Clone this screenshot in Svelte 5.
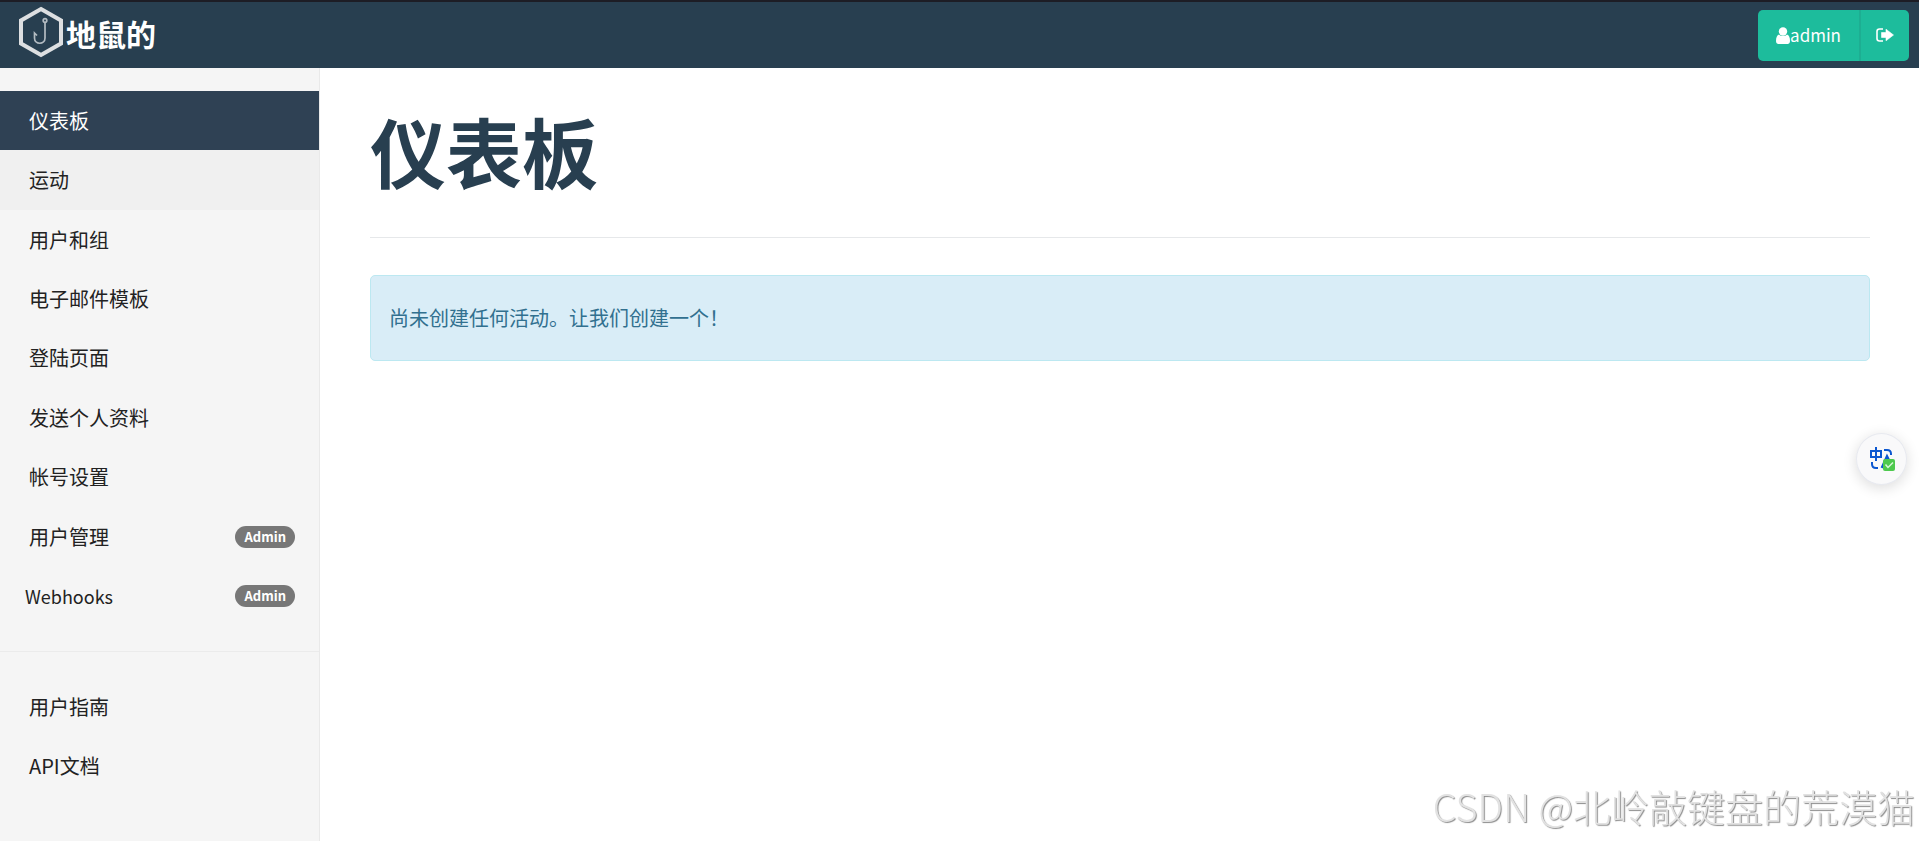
<script lang="ts">
	interface NavItem {
		label: string;
		href: string;
		admin?: boolean;
		latin?: boolean;
	}

	const items: NavItem[] = [
		{ label: '仪表板', href: '#dashboard' },
		{ label: '运动', href: '#campaigns' },
		{ label: '用户和组', href: '#groups' },
		{ label: '电子邮件模板', href: '#templates' },
		{ label: '登陆页面', href: '#landing-pages' },
		{ label: '发送个人资料', href: '#sending-profiles' },
		{ label: '帐号设置', href: '#settings' },
		{ label: '用户管理', href: '#users', admin: true },
		{ label: 'Webhooks', href: '#webhooks', admin: true, latin: true },
	];

	const docs: NavItem[] = [
		{ label: '用户指南', href: '#guide' },
		{ label: 'API文档', href: '#api' },
	];

	let current = $state('#dashboard');
	let highlighted = $state('#campaigns');
</script>

{#snippet row(item: NavItem)}
	<li>
		<a
			href={item.href}
			class:active={current === item.href}
			class:highlighted={highlighted === item.href}
			class:latin={item.latin}
			onclick={() => (current = item.href)}
			onmouseenter={() => (highlighted = item.href)}
		>
			<span>{item.label}</span>
			{#if item.admin}
				<span class="badge">Admin</span>
			{/if}
		</a>
	</li>
{/snippet}

<div class="page">
	<header class="navbar">
		<a class="brand" href="#dashboard">
			<svg viewBox="0 0 46 52" width="46" height="52" aria-hidden="true">
				<path d="M23 3 L43 14.5 V37.5 L23 49 L3 37.5 V14.5 Z" fill="none" stroke="#dddfe1" stroke-width="4" />
				<g fill="none" stroke="#b4bcc2" stroke-width="1.7">
					<circle cx="27" cy="14.5" r="1.8" />
					<path d="M27 16.5 V32 C27 39 16.500 39 16.500 32 V27 L19 29.500" />
				</g>
			</svg>
			<span>地鼠的</span>
		</a>
		<div class="user-buttons">
			<button type="button" class="user">
				<svg viewBox="0 0 14 17" width="14" height="17" aria-hidden="true">
					<circle cx="7" cy="4.5" r="4.2" fill="currentColor" />
					<path d="M3 7.5 C1 8 0 10.5 0 14 C0 16 1 17 2.5 17 H11.5 C13 17 14 16 14 14 C14 10.5 13 8 11 7.5 C9 9.5 5 9.5 3 7.5 Z" fill="currentColor" />
				</svg>
				<span>admin</span>
			</button>
			<button type="button" class="logout" aria-label="Logout">
				<svg viewBox="0 0 18 14" width="18" height="14" aria-hidden="true">
					<path d="M7 1 H3.5 Q1 1 1 3.5 V10.5 Q1 13 3.5 13 H7" fill="none" stroke="currentColor" stroke-width="1.6" />
					<path d="M5.5 4.5 H10 V1.2 L17.5 7 L10 12.8 V9.5 H5.5 Z" fill="currentColor" stroke="currentColor" stroke-width="0.6" stroke-linejoin="round" />
				</svg>
			</button>
		</div>
	</header>

	<div class="body">
		<nav class="sidebar">
			<ul class="primary">
				{#each items as item}
					{@render row(item)}
				{/each}
			</ul>
			<hr />
			<ul>
				{#each docs as item}
					{@render row(item)}
				{/each}
			</ul>
		</nav>

		<main>
			<h1>仪表板</h1>
			<hr />
			<div class="alert" role="alert">尚未创建任何活动。让我们创建一个！</div>
		</main>
	</div>
</div>

<button type="button" class="translate" aria-label="Translate">
	<svg viewBox="0 0 26 26" width="26" height="26" aria-hidden="true">
		<g fill="none" stroke="#0b57d0" stroke-width="2">
			<path d="M2 5 H12 V11 H2 Z M7 1 V15" />
			<path d="M15 4 H18 Q22 4 22 8 V9" />
			<path d="M3 16 V18 Q3 22 7 22 H9" />
			<path d="M13 22 L18 11 L21 17" stroke-width="3" />
		</g>
		<rect x="14" y="13" width="12" height="12" rx="2" fill="#4ec94e" />
		<path d="M16.5 18.500 L19 21.500 L24 16.500" fill="none" stroke="#d9f7d9" stroke-width="1.5" />
	</svg>
</button>

<div class="watermark">CSDN @北岭敲键盘的荒漠猫</div>

<style>
	:global(body) {
		background: #fff;
		color: #222;
		font-family: 'Noto Sans CJK SC', sans-serif;
		font-size: 20px;
		line-height: 28px;
	}

	.page {
		display: flex;
		flex-direction: column;
		min-height: 100vh;
	}

	.navbar {
		display: flex;
		align-items: center;
		justify-content: space-between;
		box-sizing: border-box;
		height: 68px;
		padding: 0 10px 0 18px;
		border-top: 2px solid #1d1d25;
		background: #283f50;
	}

	.brand {
		display: flex;
		align-items: center;
		gap: 2px;
		padding-bottom: 6px;
		color: #fff;
		font-size: 30px;
		font-weight: 700;
		text-decoration: none;
	}

	.brand span {
		padding-top: 2px;
	}

	.user-buttons {
		display: flex;
		height: 51px;
		border-radius: 5px;
		overflow: hidden;
	}

	.user-buttons button {
		display: flex;
		align-items: center;
		border: none;
		background: #1dbc9c;
		color: #fff;
		font: inherit;
		font-size: 17px;
		cursor: pointer;
	}

	.user-buttons .user {
		padding: 0 18px;
	}

	.user-buttons .logout {
		padding: 0 15px;
		border-left: 2px solid #1dae92;
	}

	.body {
		display: flex;
		flex: 1;
	}

	.sidebar {
		flex: none;
		box-sizing: border-box;
		width: 320px;
		padding-top: 23px;
		border-right: 1px solid #e9e9e9;
		background: #f5f5f5;
	}

	.sidebar ul {
		display: grid;
		grid-auto-rows: 1fr;
		margin: 0;
		padding: 0;
		list-style: none;
	}

	.sidebar .primary {
		min-height: 535px;
	}

	.sidebar hr {
		margin: 25px 0;
		border: none;
		border-top: 1px solid #ebebeb;
	}

	.sidebar a {
		display: flex;
		align-items: center;
		justify-content: space-between;
		box-sizing: border-box;
		height: 100%;
		min-height: 59px;
		padding: 15px 24px 15px 29px;
		color: #222;
		text-decoration: none;
	}

	.sidebar a.latin {
		padding-left: 25px;
		font-size: 18px;
	}

	.sidebar a.highlighted {
		background: #f0f0f0;
	}

	.sidebar a.active {
		background: #2f4154;
		color: #fff;
	}

	.badge {
		padding: 0 9px;
		border-radius: 11px;
		background: #777;
		color: #fff;
		font-size: 13px;
		font-weight: 700;
		line-height: 22px;
	}

	main {
		flex: 1;
		padding: 0 49px 0 50px;
	}

	h1 {
		margin: 40px 0 44px;
		color: #283f50;
		font-size: 76px;
		font-weight: 700;
		line-height: 85px;
	}

	main hr {
		margin: 0 0 37px;
		border: none;
		border-top: 1px solid #e6e8ea;
	}

	.alert {
		padding: 28px 18px;
		border: 1px solid #bce8f1;
		border-radius: 5px;
		background: #d9edf7;
		color: #31708f;
	}

	.translate {
		position: fixed;
		top: 433px;
		right: 12px;
		display: flex;
		align-items: center;
		justify-content: center;
		width: 51px;
		height: 52px;
		padding: 0;
		border: 1px solid #e8eaf0;
		border-radius: 50%;
		background: #f9f9fa;
		box-shadow: 0 3px 14px rgba(0, 0, 0, 0.14);
		cursor: pointer;
	}

	.watermark {
		position: fixed;
		right: 4px;
		bottom: 11px;
		color: #e2e2e2;
		font-size: 38px;
		font-weight: 300;
		line-height: 48px;
		text-shadow: 1px 1px 1px #8c8c8c;
		pointer-events: none;
	}
</style>
